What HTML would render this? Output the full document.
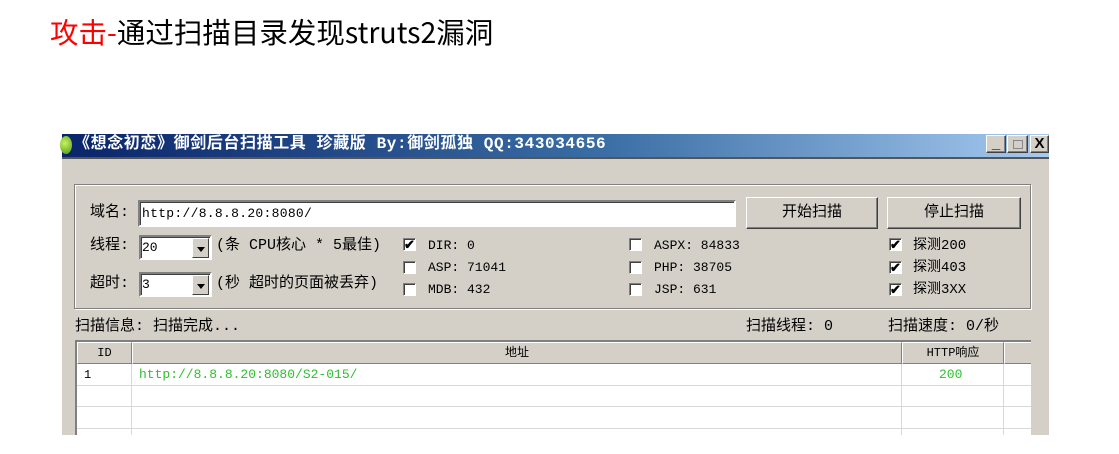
<!DOCTYPE html>
<html><head><meta charset="utf-8"><style>
*{margin:0;padding:0;box-sizing:border-box}
body{width:1119px;height:454px;background:#fff;position:relative;overflow:hidden;font-family:"Liberation Sans","Noto Sans CJK SC",sans-serif}
.a{position:absolute}
.t{font-size:13px;color:#000;white-space:nowrap;line-height:16px;font-family:"Liberation Mono","Noto Sans CJK SC",monospace}
.z{font-family:"Liberation Mono","Noto Sans CJK SC","WenQuanYi Zen Hei",monospace}
.sunk{background:#fff;border:2px solid;border-color:#808080 #fff #fff #808080;box-shadow:inset 1px 1px #404040}
.btn{background:#d4d0c8;border:1px solid;border-color:#fff #404040 #404040 #fff;box-shadow:inset -1px -1px #808080;text-align:center;font-size:15px}
.cb{width:13px;height:13px;background:#fff;border:1px solid;border-color:#808080 #fff #fff #808080;box-shadow:inset 1px 1px #404040;font-size:13px;line-height:11px;text-align:center;font-weight:bold}
.dd{position:absolute;right:1px;top:1px;width:17px;height:20px;background:#d4d0c8;border:1px solid;border-color:#fff #404040 #404040 #fff}
.dd:after{content:"";position:absolute;left:4px;top:8px;border:4px solid transparent;border-top:5px solid #000}
.hd{position:absolute;top:0;height:22px;background:#d4d0c8;border:1px solid;border-color:#fff #808080 #808080 #fff;text-align:center;font-size:12px;line-height:20px}
.row{position:absolute;left:0;right:0;height:1px;background:#d8d8d8}
.col{position:absolute;top:22px;bottom:0;width:1px;background:#d8d8d8}
</style></head><body>
<div class="a" style="left:50px;top:12px;font-size:28.5px;line-height:40px;font-family:'Noto Sans CJK SC',sans-serif;white-space:nowrap"><span style="color:#f00">攻击-</span>通过扫描目录发现struts2漏洞</div>

<div class="a" style="left:62px;top:134px;width:987px;height:301px;background:#d4d0c8"></div>
<div class="a" style="left:62px;top:134px;width:987px;height:23px;background:linear-gradient(90deg,#0a246a 0%,#3a6ea5 55%,#a6caf0 100%)"></div>
<div class="a" style="left:60px;top:136px;width:12px;height:18px;border-radius:50%;background:radial-gradient(circle at 40% 40%,#c8f060,#4a9a10)"></div>
<div class="a" style="left:74px;top:134px;color:#fff;font-weight:bold;font-size:16px;line-height:21px;white-space:nowrap;letter-spacing:0.6px;font-family:'Liberation Mono','Noto Sans CJK SC',monospace">《想念初恋》御剑后台扫描工具 珍藏版 By:御剑孤独 QQ:343034656</div>
<div class="a" style="left:62px;top:157px;width:987px;height:2px;background:#555"></div>
<div class="a btn" style="left:986px;top:135px;width:20px;height:18px;font-weight:bold;line-height:16px">_</div>
<div class="a btn" style="left:1007px;top:135px;width:21px;height:18px"><div style="margin:4px auto;width:10px;height:9px;border:1px solid #888"></div></div>
<div class="a btn" style="left:1030px;top:135px;width:19px;height:18px;font-weight:bold;line-height:16px">X</div>

<div class="a" style="left:74px;top:184px;width:957px;height:125px;border:1px solid #808080;box-shadow:1px 1px #fff,inset 1px 1px #fff"></div>

<div class="a t z" style="left:90px;top:205px;font-size:15px">域名:</div>
<div class="a sunk" style="left:138px;top:200px;width:598px;height:27px"><div class="t" style="padding:4px 2px;letter-spacing:0.3px">http://8.8.8.20:8080/</div></div>
<div class="a btn z" style="left:746px;top:197px;width:132px;height:32px;line-height:30px">开始扫描</div>
<div class="a btn z" style="left:887px;top:197px;width:134px;height:32px;line-height:30px">停止扫描</div>

<div class="a t z" style="left:90px;top:238px;font-size:15px">线程:</div>
<div class="a sunk" style="left:139px;top:235px;width:73px;height:25px"><div class="t" style="padding:3px 1px">20</div><div class="dd"></div></div>
<div class="a t z" style="left:216px;top:238px;font-size:15px">(条 CPU核心 * 5最佳)</div>
<div class="a t z" style="left:90px;top:276px;font-size:15px">超时:</div>
<div class="a sunk" style="left:139px;top:272px;width:73px;height:25px"><div class="t" style="padding:3px 1px">3</div><div class="dd"></div></div>
<div class="a t z" style="left:216px;top:276px;font-size:15px">(秒 超时的页面被丢弃)</div>

<div class="a cb" style="left:403px;top:238px">✔</div><div class="a t" style="left:428px;top:238px">DIR: 0</div>
<div class="a cb" style="left:403px;top:261px"></div><div class="a t" style="left:428px;top:260px">ASP: 71041</div>
<div class="a cb" style="left:403px;top:283px"></div><div class="a t" style="left:428px;top:282px">MDB: 432</div>
<div class="a cb" style="left:629px;top:238px"></div><div class="a t" style="left:654px;top:238px">ASPX: 84833</div>
<div class="a cb" style="left:629px;top:261px"></div><div class="a t" style="left:654px;top:260px">PHP: 38705</div>
<div class="a cb" style="left:629px;top:283px"></div><div class="a t" style="left:654px;top:282px">JSP: 631</div>
<div class="a cb" style="left:889px;top:238px">✔</div><div class="a t z" style="left:913px;top:238px;font-size:14px">探测200</div>
<div class="a cb" style="left:889px;top:261px">✔</div><div class="a t z" style="left:913px;top:260px;font-size:14px">探测403</div>
<div class="a cb" style="left:889px;top:283px">✔</div><div class="a t z" style="left:913px;top:282px;font-size:14px">探测3XX</div>

<div class="a t z" style="left:75px;top:319px;font-size:15px">扫描信息: 扫描完成...</div>
<div class="a t z" style="left:746px;top:319px;font-size:15px">扫描线程: 0</div>
<div class="a t z" style="left:888px;top:319px;font-size:15px">扫描速度: 0/秒</div>

<div class="a" style="left:75px;top:340px;width:956px;height:95px;background:#fff;border-left:2px solid #808080;border-top:2px solid #808080;overflow:hidden">
 <div class="hd t" style="left:0;width:55px">ID</div>
 <div class="hd t z" style="left:55px;width:770px">地址</div>
 <div class="hd t z" style="left:825px;width:102px">HTTP响应</div>
 <div class="hd" style="left:927px;width:40px"></div>
 <div class="col" style="left:54px"></div><div class="col" style="left:824px"></div><div class="col" style="left:926px"></div>
 <div class="row" style="top:43px"></div><div class="row" style="top:64px"></div><div class="row" style="top:86px"></div>
 <div class="a t" style="left:7px;top:25px;font-size:12px">1</div>
 <div class="a t" style="left:62px;top:25px;font-size:13px;color:#2ec02e">http://8.8.8.20:8080/S2-015/</div>
 <div class="a t" style="left:862px;top:25px;font-size:13px;color:#2ec02e">200</div>
</div>
</body></html>
